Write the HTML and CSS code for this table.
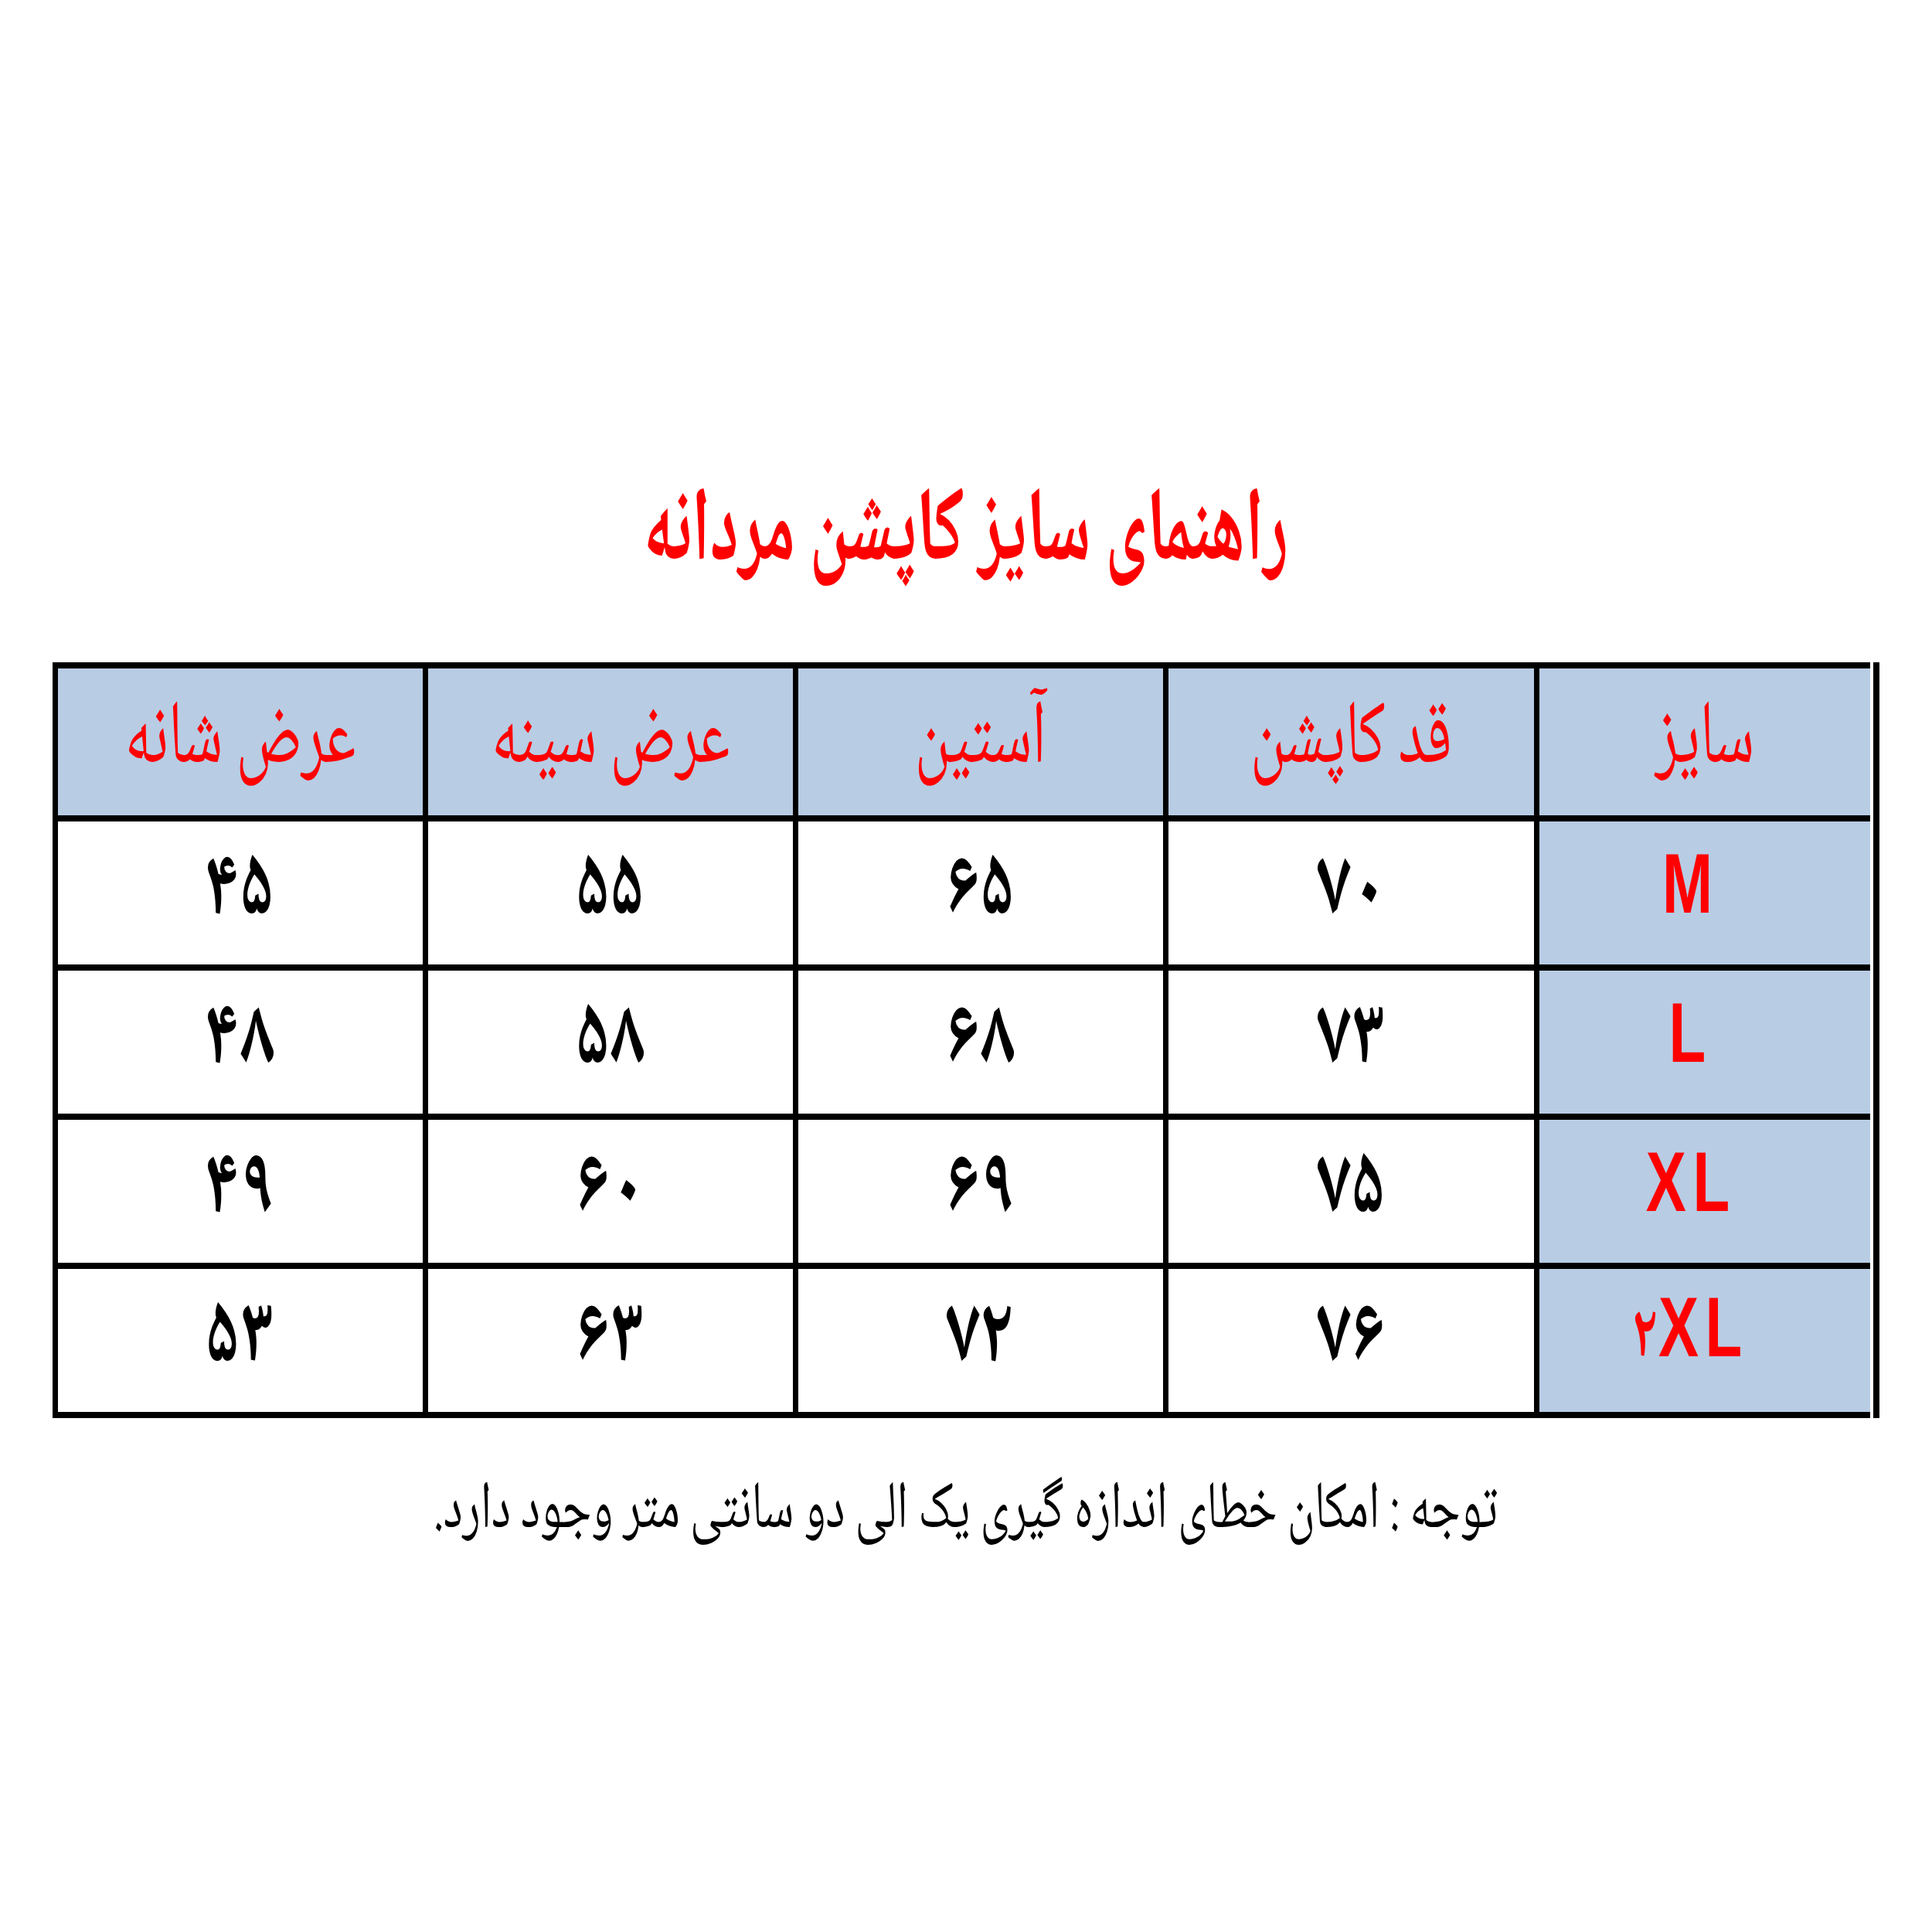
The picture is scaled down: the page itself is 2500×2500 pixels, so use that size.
FILE: index.html
```html
<!DOCTYPE html>
<html lang="fa">
<head>
<meta charset="utf-8">
<title>راهنمای سایز کاپشن مردانه</title>
<link rel="stylesheet" href="styles.css">
</head>
<body>
<div class="page">
  <h1 class="title" dir="rtl">راهنمای سایز کاپشن مردانه</h1>
  <div class="table-wrap">
    <div class="grid" dir="rtl">
      <div class="cell head"><span class="t">سایز</span></div>
      <div class="cell head"><span class="t">قد کاپشن</span></div>
      <div class="cell head"><span class="t">آستین</span></div>
      <div class="cell head"><span class="t">عرض سینه</span></div>
      <div class="cell head"><span class="t">عرض شانه</span></div>

      <div class="cell size"><span class="t" dir="ltr">M</span></div>
      <div class="cell num"><span class="t">۷۰</span></div>
      <div class="cell num"><span class="t">۶۵</span></div>
      <div class="cell num"><span class="t">۵۵</span></div>
      <div class="cell num"><span class="t">۴۵</span></div>

      <div class="cell size"><span class="t" dir="ltr">L</span></div>
      <div class="cell num"><span class="t">۷۳</span></div>
      <div class="cell num"><span class="t">۶۸</span></div>
      <div class="cell num"><span class="t">۵۸</span></div>
      <div class="cell num"><span class="t">۴۸</span></div>

      <div class="cell size"><span class="t" dir="ltr">XL</span></div>
      <div class="cell num"><span class="t">۷۵</span></div>
      <div class="cell num"><span class="t">۶۹</span></div>
      <div class="cell num"><span class="t">۶۰</span></div>
      <div class="cell num"><span class="t">۴۹</span></div>

      <div class="cell size"><span class="t" dir="ltr"><span class="fa-digit">۲</span>XL</span></div>
      <div class="cell num"><span class="t">۷۶</span></div>
      <div class="cell num"><span class="t">۷۲</span></div>
      <div class="cell num"><span class="t">۶۳</span></div>
      <div class="cell num"><span class="t">۵۳</span></div>
    </div>
    <div class="edge"></div>
  </div>
  <p class="note" dir="rtl">توجه : امکان خطای اندازه گیری یک الی دو سانتی متر وجود دارد.</p>
</div>
</body>
</html>
```

FILE: styles.css
```css
html, body {
  margin: 0;
  padding: 0;
  background: #ffffff;
}

.page {
  width: 2500px;
  height: 2500px;
  display: flex;
  flex-direction: column;
  align-items: center;
  font-family: "Noto Naskh Arabic", "Noto Sans Arabic", "DejaVu Sans", sans-serif;
}

.title {
  margin: 610px 0 0 0;
  font-size: 136px;
  line-height: 170px;
  font-weight: bold;
  color: #ff0000;
  white-space: nowrap;
  transform: scaleX(0.62);
}

.table-wrap {
  align-self: flex-start;
  margin-left: 68px;
  margin-top: 77px;
  display: flex;
  gap: 4px;
}

.grid {
  display: grid;
  grid-template-columns: 428px 473px 472px 472px 472px;
  grid-template-rows: 190px repeat(4, 185px);
  gap: 8px 7px;
  padding: 8px 0 8px 7px;
  background: #000000;
}

.edge {
  width: 8px;
  background: #000000;
}

.cell {
  display: flex;
  align-items: center;
  justify-content: center;
  background: #ffffff;
  line-height: 1;
  box-sizing: border-box;
}

.t {
  display: inline-block;
  white-space: nowrap;
}

.head {
  background: #b8cce4;
  color: #ff0000;
  font-size: 117px;
}

.head .t {
  transform: scaleX(0.66);
}

.size {
  background: #b8cce4;
  color: #ff0000;
  font-family: "Liberation Sans", sans-serif;
  font-weight: bold;
  font-size: 110px;
  padding-bottom: 26px;
  padding-right: 36px;
}

.size .t {
  transform: scaleX(0.71);
  letter-spacing: 12px;
}

.fa-digit {
  font-family: "Noto Naskh Arabic", "Noto Sans Arabic", "DejaVu Sans", sans-serif;
  font-size: 96px;
  letter-spacing: 6px;
}

.num {
  color: #000000;
  font-weight: bold;
  font-size: 120px;
}

.num .t {
  transform: scaleX(0.76);
}

.note {
  margin: 72px 0 0 0;
  font-size: 87px;
  line-height: 100px;
  color: #000000;
  white-space: nowrap;
  transform: scaleX(0.69);
}
```
